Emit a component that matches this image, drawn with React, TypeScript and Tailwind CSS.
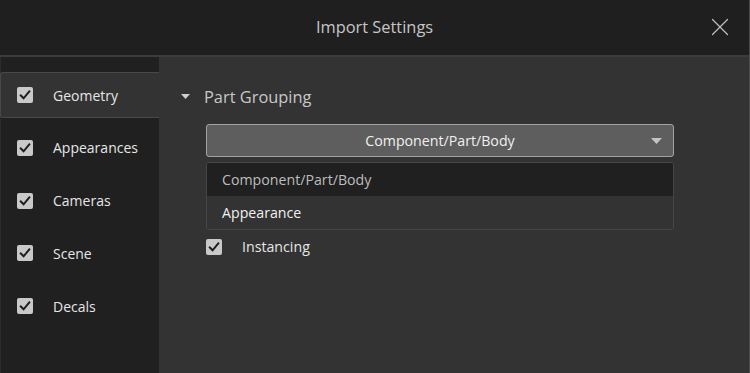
import { X } from 'lucide-react';

const SECTIONS = ['Geometry', 'Appearances', 'Cameras', 'Scene', 'Decals'];

function Check({ className = '' }: { className?: string }) {
  return (
    <span className={`w-4 h-4 rounded-[2px] bg-[#c9c9c9] flex items-center justify-center shrink-0 ${className}`}>
      <svg width="12" height="12" viewBox="0 0 12 12" fill="none">
        <path d="M1.8 6.4 L4.6 9.3 L10.3 2.4" stroke="#1e1e1e" strokeWidth="2" strokeLinecap="square" />
      </svg>
    </span>
  );
}

export default function App() {
  return (
    <div
      className="w-[750px] h-[373px] bg-[#1f1f1f] flex flex-col overflow-hidden border-r border-[#4a4a4a]"
      style={{ fontFamily: '"Segoe UI", "Open Sans", "Noto Sans", sans-serif' }}
    >
      {/* Title bar */}
      <div className="h-[57px] shrink-0 relative flex items-center justify-center border-b-2 border-[#3c3c3c]">
        <span className="text-[16.4px] text-[#c6c6c6]">Import Settings</span>
        <button className="absolute right-[14px] top-[12px] text-[#bdbdbd]">
          <X size={30} strokeWidth={1} />
        </button>
      </div>

      <div className="flex flex-1 min-h-0">
        {/* Sidebar */}
        <div className="w-[159px] shrink-0 bg-[#202020] pt-[15px] border-l border-[#2c2c2c]">
          {SECTIONS.map((s, i) => (
            <div
              key={s}
              className={`h-[46px] flex items-center gap-[20px] pl-[16px] mb-[6.8px] ${
                i === 0
                  ? 'bg-[#333333] border border-r-0 border-[#484848] rounded-l-[3px] -ml-px'
                  : ''
              }`}
            >
              <Check />
              <span className="text-[14px] text-[#e6e6e6]">{s}</span>
            </div>
          ))}
        </div>

        {/* Content */}
        <div className="flex-1 bg-[#333333] pl-[47px] pr-[75px] pt-[28px]">
          <div className="flex items-center -ml-[25px] gap-[14px] h-[24px]">
            <svg width="9" height="6" viewBox="0 0 9 6">
              <path d="M0 0 H9 L4.5 5 Z" fill="#cfcfcf" />
            </svg>
            <span className="text-[16.4px] text-[#c8c8c8]">Part Grouping</span>
          </div>

          <div className="mt-[15px] h-[33px] rounded-[3px] border border-[#a3a3a3] bg-[#5e5e5e] relative flex items-center justify-center">
            <span className="text-[14.2px] text-[#f0f0f0]">Component/Part/Body</span>
            <svg className="absolute right-[11px] top-[13px]" width="11" height="6" viewBox="0 0 11 6">
              <path d="M0 0 H11 L5.5 6 Z" fill="#c4c4c4" />
            </svg>
          </div>

          <div className="mt-[5px] rounded-[3px] border border-[#464646] overflow-hidden">
            <div className="h-[33px] bg-[#202020] flex items-center pl-[15px]">
              <span className="text-[14.2px] text-[#bdbdbd]">Component/Part/Body</span>
            </div>
            <div className="h-[33px] bg-[#333333] flex items-center pl-[15px]">
              <span className="text-[14.2px] text-[#f0f0f0]">Appearance</span>
            </div>
          </div>

          <div className="mt-[6px] flex items-center gap-[20px]">
            <Check />
            <span className="text-[14.2px] text-[#e6e6e6]">Instancing</span>
          </div>
        </div>
      </div>
    </div>
  );
}
